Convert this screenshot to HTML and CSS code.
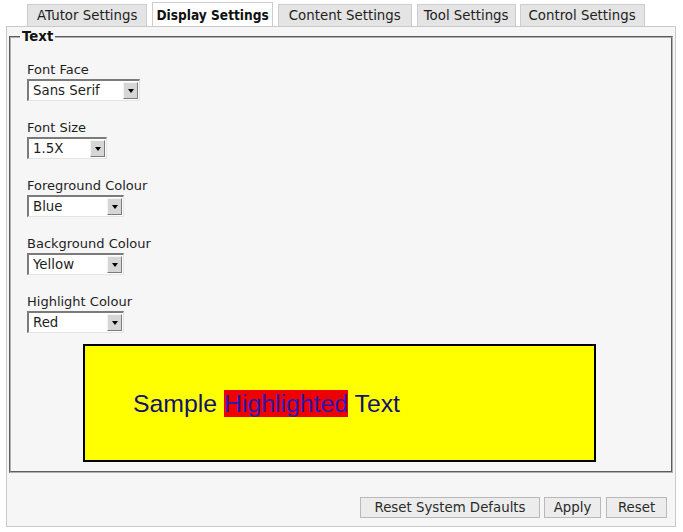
FILE: index.html
```html
<!DOCTYPE html>
<html lang="en">
<head>
<meta charset="utf-8">
<title>Display Settings</title>
<link rel="stylesheet" href="styles.css">
</head>
<body>
<div class="tabs">
  <div class="tab">ATutor Settings</div>
  <div class="tab active">Display Settings</div>
  <div class="tab t-wide">Content Settings</div>
  <div class="tab t-tool">Tool Settings</div>
  <div class="tab t-control">Control Settings</div>
</div>
<div class="panel">
  <fieldset class="group">
    <legend>Text</legend>
    <div class="fields">
      <div class="field">
        <label>Font Face</label>
        <div class="select w-face"><span class="val">Sans Serif</span><span class="arrow"><i></i></span></div>
      </div>
      <div class="field">
        <label>Font Size</label>
        <div class="select w-size"><span class="val">1.5X</span><span class="arrow"><i></i></span></div>
      </div>
      <div class="field">
        <label>Foreground Colour</label>
        <div class="select w-colour"><span class="val">Blue</span><span class="arrow"><i></i></span></div>
      </div>
      <div class="field">
        <label>Background Colour</label>
        <div class="select w-colour"><span class="val">Yellow</span><span class="arrow"><i></i></span></div>
      </div>
      <div class="field">
        <label>Highlight Colour</label>
        <div class="select w-colour"><span class="val">Red</span><span class="arrow"><i></i></span></div>
      </div>
    </div>
    <div class="preview"><p>Sample <span class="hl">Highlighted</span> Text</p></div>
  </fieldset>
  <div class="actions">
    <button class="btn btn-defaults">Reset System Defaults</button>
    <button class="btn btn-apply">Apply</button>
    <button class="btn btn-reset">Reset</button>
  </div>
</div>
</body>
</html>
```
FILE: styles.css
```css
html, body {
  margin: 0;
  padding: 0;
  background: #ffffff;
}
body {
  font-family: "DejaVu Sans", "Liberation Sans", sans-serif;
  font-size: 13px;
  color: #1e1e1e;
}

.tabs {
  display: flex;
  align-items: flex-end;
  gap: 5px;
  height: 26px;
  padding-left: 27px;
}
.tab {
  height: 21px;
  line-height: 21px;
  padding: 0 9px;
  border: 1px solid #cdcdcd;
  border-bottom: none;
  background: #e4e4e4;
  font-size: 13.33px;
  white-space: nowrap;
}
.tab.t-wide { padding: 0 10px; }
.tab.t-tool { padding: 0 6px; }
.tab.t-control { padding: 0 8px; margin-left: -1px; }
.tab.active {
  background: #ffffff;
  font-family: "DejaVu Sans Condensed", "DejaVu Sans", sans-serif;
  font-weight: bold;
  font-size: 13.6px;
  padding: 2px 3px 0;
  color: #111;
}

.panel {
  box-sizing: border-box;
  width: 670px;
  margin-left: 6px;
  padding: 2px 2px 8px;
  border: 1px solid #c9c9c9;
  background: #f6f6f6;
}

.group {
  margin: 0;
  padding: 18px 9px 9px;
  border: 2px groove #b0b0b0;
}
.group legend {
  padding: 0 2px;
  font-weight: bold;
  font-size: 13.33px;
  line-height: 15px;
  color: #111;
}

.fields {
  padding-left: 7px;
}
.field {
  margin-bottom: 19px;
}
.field:last-child {
  margin-bottom: 0;
}
.field label {
  display: block;
  line-height: 15px;
  margin-bottom: 2px;
}

.select {
  display: flex;
  box-sizing: border-box;
  height: 22px;
  border-style: solid;
  border-width: 2px 1px 1px 2px;
  border-color: #7b7b7b #e4e4e4 #e4e4e4 #7b7b7b;
  background: #ffffff;
}
.w-face { width: 113px; }
.w-size { width: 80px; }
.w-colour { width: 97px; }
.val {
  flex: 1;
  padding-left: 4px;
  line-height: 19px;
  font-size: 13.33px;
}
.arrow {
  box-sizing: border-box;
  width: 15px;
  margin: 1px 1px 1px 0;
  border: 1px solid;
  border-color: #f4f4f4 #7a7a7a #7a7a7a #f4f4f4;
  background: #d6d6d6;
  display: flex;
  align-items: center;
  justify-content: center;
}
.arrow i {
  display: block;
  width: 0;
  height: 0;
  border-left: 3.5px solid transparent;
  border-right: 3.5px solid transparent;
  border-top: 4px solid #000;
  margin-top: 1px;
}

.preview {
  box-sizing: border-box;
  width: 513px;
  height: 118px;
  margin: 11px 0 0 63px;
  border: 2px solid #000;
  background: #ffff00;
  display: flex;
  align-items: center;
  padding: 2px 0 0 48px;
}
.preview p {
  margin: 0;
  font-family: "Liberation Sans", Arial, sans-serif;
  font-size: 24.8px;
  color: #12126e;
}
.preview .hl {
  background: #ee0000;
  color: #2a1ab4;
}

.actions {
  display: flex;
  justify-content: flex-end;
  gap: 4px;
  margin-top: 24px;
  padding-right: 6px;
}
.btn {
  height: 21px;
  padding: 0;
  margin: 0;
  border: 1px solid #b9b9b9;
  background: #ececec;
  font-family: "DejaVu Sans", "Liberation Sans", sans-serif;
  font-size: 13.33px;
  color: #2a2a2a;
  line-height: 19px;
  text-align: center;
}
.btn-defaults { width: 180px; }
.btn-apply { width: 57px; }
.btn-reset { width: 61px; margin-left: 1px; }
```
